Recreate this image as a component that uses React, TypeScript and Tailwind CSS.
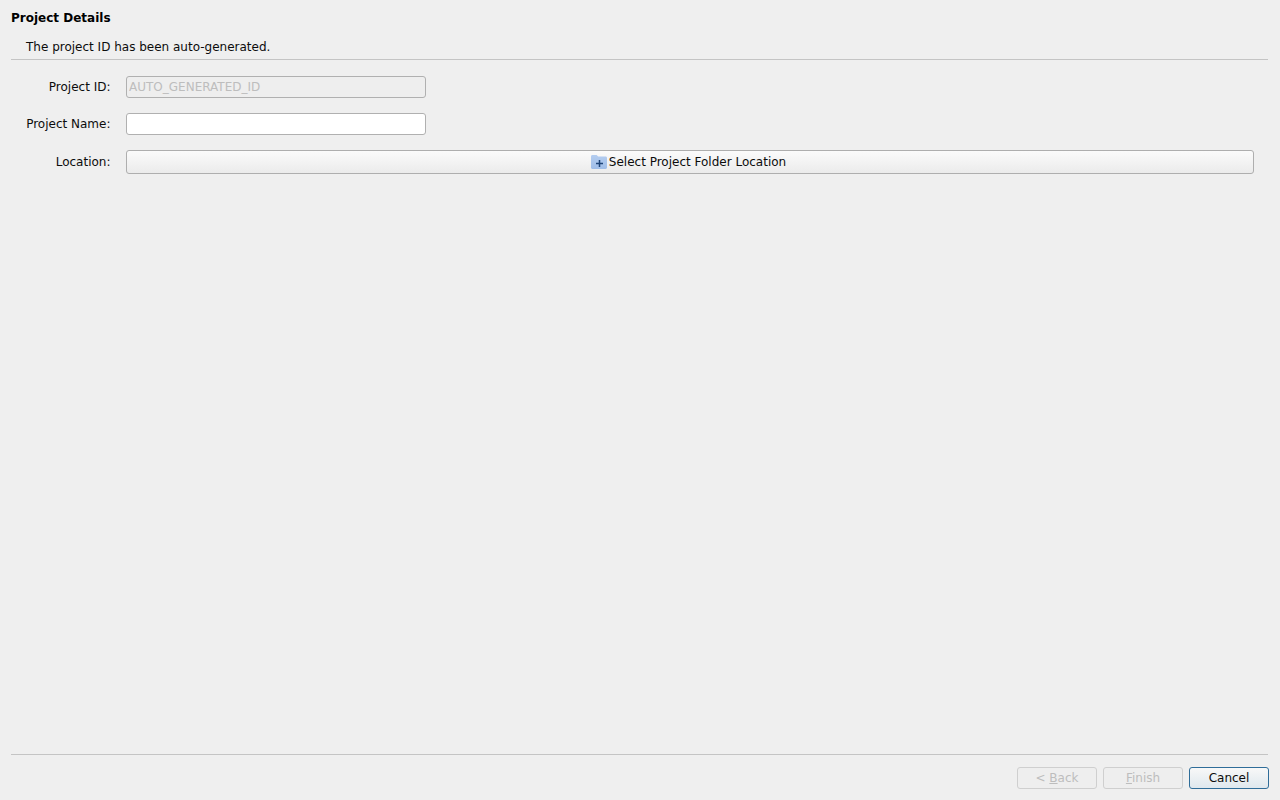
export default function App() {
  const font = { fontFamily: '"DejaVu Sans", sans-serif' };
  return (
    <div style={font} className="h-[800px] w-[1280px] overflow-hidden bg-[#efefef] text-[12px] text-[#0c0c0c] flex flex-col pl-[11px] pr-[12px]">
      <div className="h-[35px] pt-[10px] leading-[17px] font-bold text-[#000]">Project Details</div>
      <div className="h-[25px] pl-[15px] pt-[4px] leading-[17px] border-b border-[#c4c4c4]">The project ID has been auto-generated.</div>
      <div className="flex-1 flex flex-col pt-[16px] gap-[15px] pr-[14px]">
        <div className="flex items-center h-[22px]">
          <span className="w-[99.5px] text-right">Project ID:</span>
          <input disabled value="AUTO_GENERATED_ID" readOnly className="ml-[15.5px] w-[300px] h-[22px] rounded-[3px] border border-[#b0b0b0] bg-[#eeeeee] px-[2px] pb-[1px] text-[#bdbdbd] outline-none" />
        </div>
        <div className="flex items-center h-[22px]">
          <span className="w-[99.5px] text-right">Project Name:</span>
          <input className="ml-[15.5px] w-[300px] h-[22px] rounded-[3px] border border-[#b0b0b0] bg-white outline-none" />
        </div>
        <div className="flex items-center h-[24px]">
          <span className="w-[99.5px] text-right">Location:</span>
          <button className="ml-[15.5px] flex-1 h-[24px] rounded-[3px] border border-[#aeaeae] bg-gradient-to-b from-[#fbfbfb] to-[#ebebeb] flex items-center justify-center gap-[2px] pr-[3px]">
            <svg width="16" height="16" viewBox="0 0 16 16">
              <defs>
                <linearGradient id="folder" x1="0" y1="0" x2="0" y2="1">
                  <stop offset="0" stopColor="#b4cdf0" />
                  <stop offset="1" stopColor="#9fbde8" />
                </linearGradient>
              </defs>
              <path d="M0 2.5C0 1.7.6 1 1.4 1h4.2l1.6 1.6h7.4c.8 0 1.4.6 1.4 1.4v9.5c0 .8-.6 1.4-1.4 1.4H1.4C.6 15 0 14.3 0 13.5z" fill="url(#folder)" />
              <path d="M8.5 6v7M5 9.5h7" stroke="#1f4478" strokeWidth="1.5" fill="none" />
            </svg>
            <span>Select Project Folder Location</span>
          </button>
        </div>
      </div>
      <div className="h-[46px] border-t border-[#c4c4c4]">
        <div className="flex justify-end gap-[6px] pt-[12px] -mr-[1px]">
          <button className="w-[80px] h-[22px] rounded-[3px] border border-[#cfcfcf] bg-[#eeeeee] text-[#bdbdbd]">&lt; <span className="underline">B</span>ack</button>
          <button className="w-[80px] h-[22px] rounded-[3px] border border-[#cfcfcf] bg-[#eeeeee] text-[#bdbdbd]"><span className="underline">F</span>inish</button>
          <button className="w-[80px] h-[22px] rounded-[3px] border border-[#2f6d99] bg-gradient-to-b from-[#f8f8f8] to-[#dfe8ee]">Cancel</button>
        </div>
      </div>
    </div>
  );
}
